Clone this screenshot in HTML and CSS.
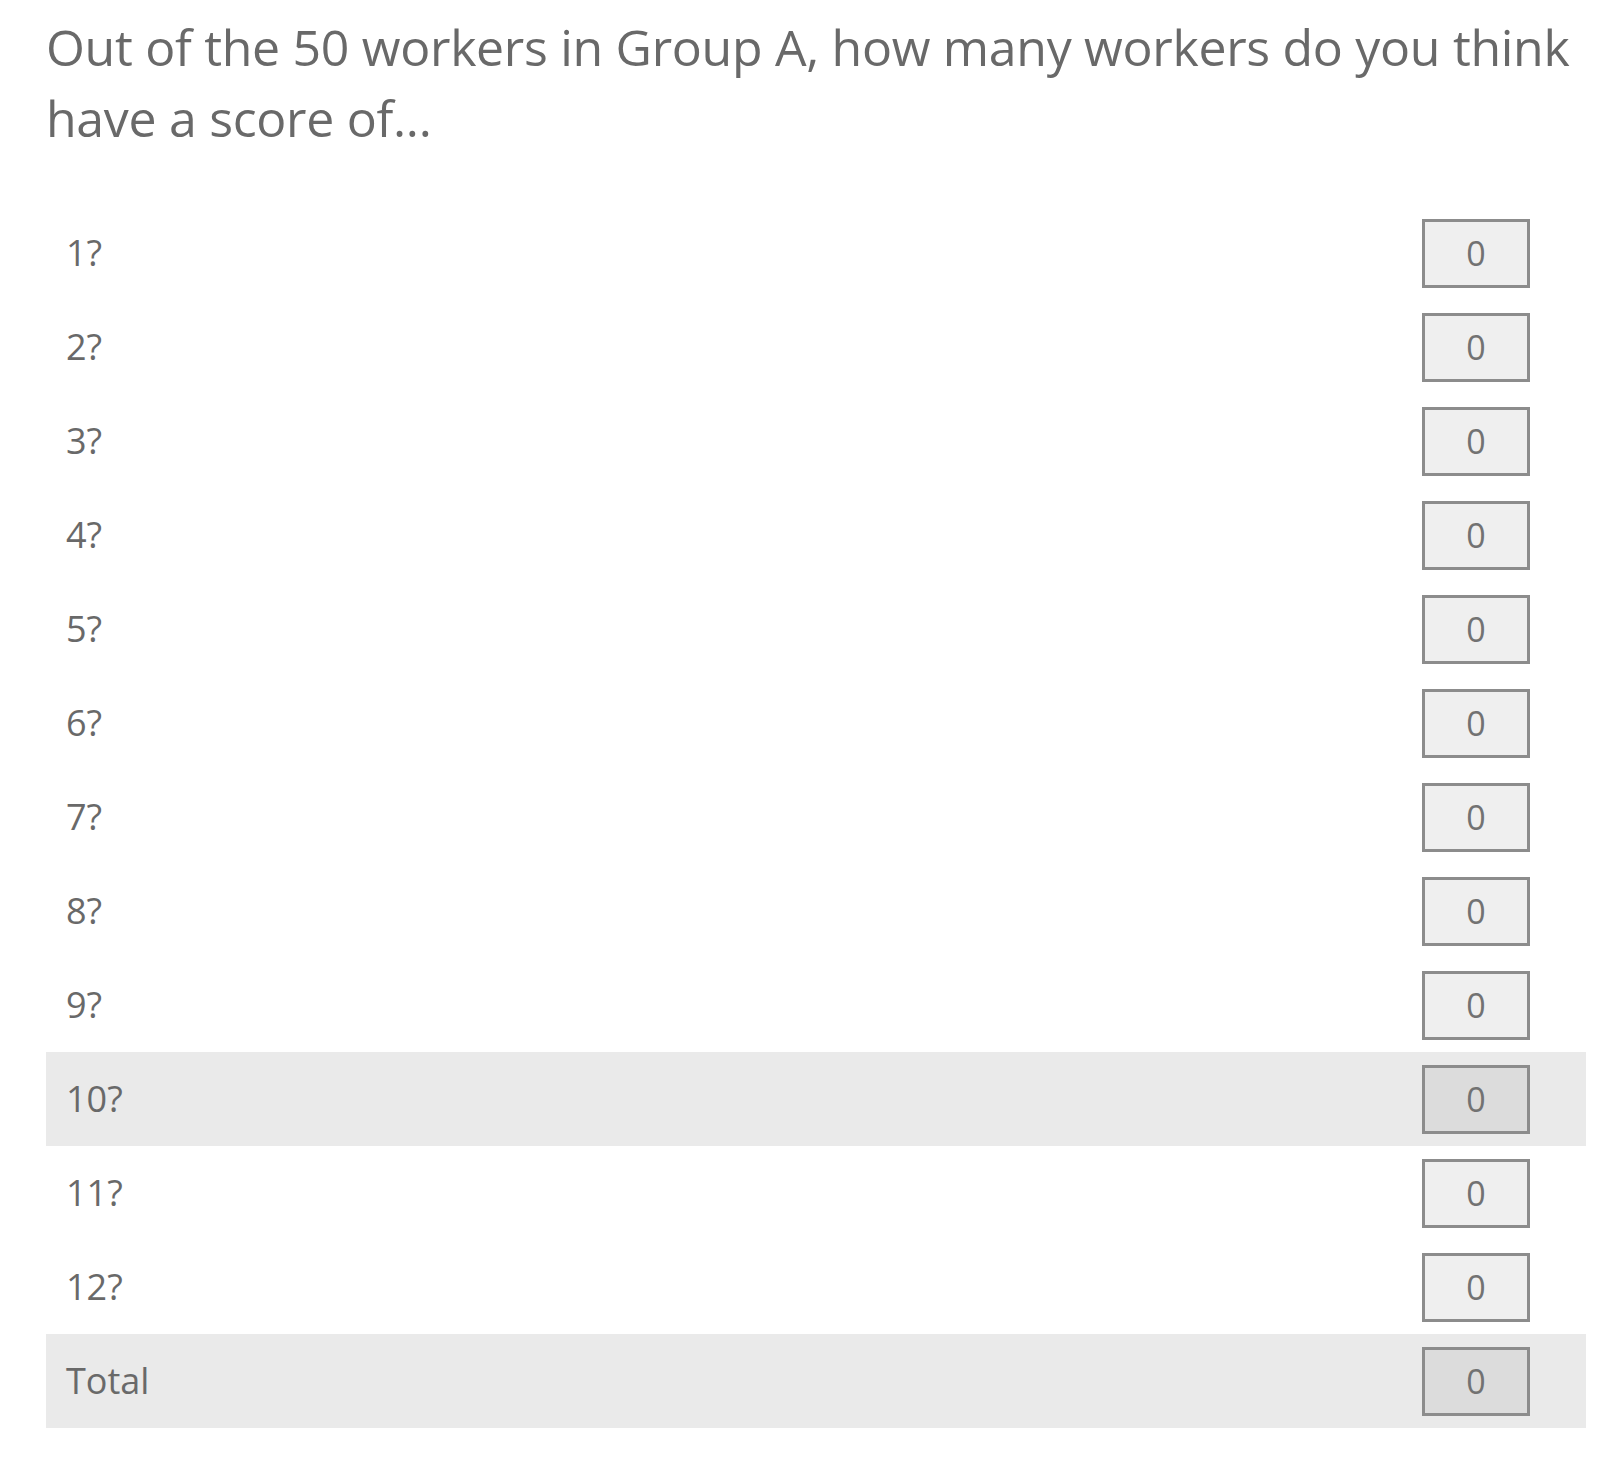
FILE: index.html
```html
<!DOCTYPE html>
<html lang="en">
<head>
<meta charset="utf-8">
<title>Score estimate</title>
<link rel="stylesheet" href="styles.css">
</head>
<body>
<div class="question">
  <p class="prompt">Out of the 50 workers in Group A, how many workers do you think have a score of...</p>
  <div class="rows">
    <div class="row"><span class="label">1?</span><div class="box">0</div></div>
    <div class="row"><span class="label">2?</span><div class="box">0</div></div>
    <div class="row"><span class="label">3?</span><div class="box">0</div></div>
    <div class="row"><span class="label">4?</span><div class="box">0</div></div>
    <div class="row"><span class="label">5?</span><div class="box">0</div></div>
    <div class="row"><span class="label">6?</span><div class="box">0</div></div>
    <div class="row"><span class="label">7?</span><div class="box">0</div></div>
    <div class="row"><span class="label">8?</span><div class="box">0</div></div>
    <div class="row"><span class="label">9?</span><div class="box">0</div></div>
    <div class="row shaded"><span class="label">10?</span><div class="box">0</div></div>
    <div class="row"><span class="label">11?</span><div class="box">0</div></div>
    <div class="row"><span class="label">12?</span><div class="box">0</div></div>
    <div class="row shaded"><span class="label">Total</span><div class="box">0</div></div>
  </div>
</div>
</body>
</html>
```

FILE: styles.css
```css
html, body {
  margin: 0;
  padding: 0;
  background: #ffffff;
}

body {
  font-family: "Open Sans", "Noto Sans", sans-serif;
  color: #696969;
}

.question {
  padding: 12px 36px 0 46px;
}

.prompt {
  margin: 0 0 52px 0;
  font-size: 50px;
  line-height: 71px;
  font-weight: 400;
  letter-spacing: -0.3px;
}

.rows {
  display: flex;
  flex-direction: column;
}

.row {
  display: flex;
  align-items: center;
  justify-content: space-between;
  height: 94px;
  padding: 0 56px 0 20px;
}

.row.shaded {
  background: #eaeaea;
}

.label {
  font-size: 36px;
  line-height: 40px;
}

.box {
  box-sizing: border-box;
  width: 108px;
  height: 69px;
  border: 3px solid #8c8c8c;
  background: #efefef;
  display: flex;
  align-items: center;
  justify-content: center;
  font-family: "Open Sans", sans-serif;
  font-size: 34px;
  color: #727272;
}

.row.shaded .box {
  background: #dcdcdc;
}
```
